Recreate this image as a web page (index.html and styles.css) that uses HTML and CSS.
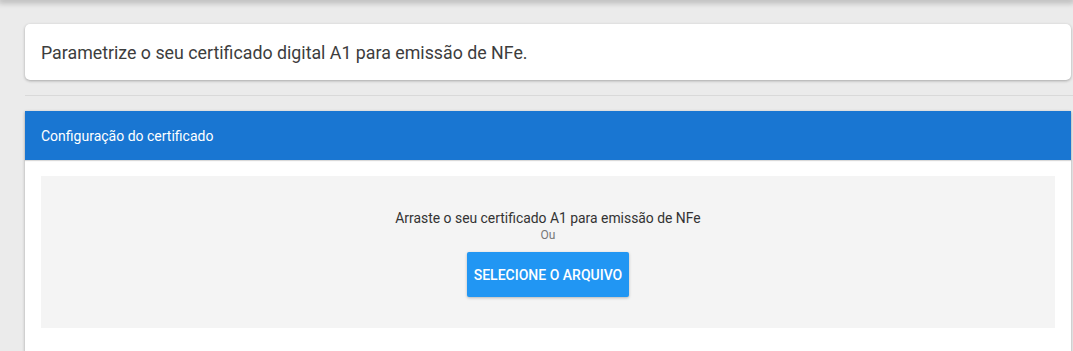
FILE: index.html
```html
<!DOCTYPE html>
<html lang="pt-BR">
<head>
    <meta charset="UTF-8">
    <meta name="viewport" content="width=device-width, initial-scale=1.0">
    <title>Certificado digital</title>
    <link rel="stylesheet" href="styles.css">
</head>
<body>
    <div class="top-shadow"></div>

    <div class="page">
        <div class="intro-card">
            Parametrize o seu certificado digital A1 para emissão de NFe.
        </div>

        <hr class="divider">

        <div class="panel">
            <div class="panel-header">Configuração do certificado</div>
            <div class="panel-body">
                <div class="dropzone">
                    <p class="drop-text">Arraste o seu certificado A1 para emissão de NFe</p>
                    <p class="drop-or">Ou</p>
                    <button class="btn-file">SELECIONE O ARQUIVO</button>
                </div>
            </div>
        </div>
    </div>
</body>
</html>
```

FILE: styles.css
```css
* {
    margin: 0;
    padding: 0;
    box-sizing: border-box;
}

body {
    font-family: Roboto, 'Liberation Sans', Arial, sans-serif;
    background: #ebebeb;
    height: 351px;
    overflow: hidden;
}

.top-shadow {
    height: 0;
    box-shadow: 0 0 6px 2px rgba(0, 0, 0, 0.35);
}

.page {
    padding: 24px 2px 0 25px;
}

.intro-card {
    background: white;
    height: 56px;
    padding: 0 16px;
    display: flex;
    align-items: center;
    border-radius: 5px;
    box-shadow: 0 1px 3px rgba(0, 0, 0, 0.3);
    font-size: 17.8px;
    color: #3d3d3d;
}

.divider {
    border: none;
    border-top: 1px solid #d9d9d9;
    margin: 15px -2px 15px 0;
}

.panel {
    background: white;
    box-shadow: 0 1px 3px rgba(0, 0, 0, 0.3);
}

.panel-header {
    background: #1976d2;
    height: 49px;
    padding: 0 16px;
    display: flex;
    align-items: center;
    color: white;
    font-size: 14px;
    box-shadow: 0 1px 1px rgba(0, 0, 0, 0.15);
}

.panel-body {
    padding: 16px 16px 40px;
}

.dropzone {
    background: #f4f4f4;
    padding: 33px 0 31px;
    display: flex;
    flex-direction: column;
    align-items: center;
    text-align: center;
}

.drop-text {
    font-size: 13.9px;
    line-height: 18px;
    color: #333;
}

.drop-or {
    font-size: 12px;
    line-height: 16px;
    color: #777;
}

.btn-file {
    margin-top: 9px;
    height: 45px;
    padding: 0 7px;
    border: none;
    border-radius: 2px;
    background: #2196f3;
    color: white;
    font-family: inherit;
    font-size: 14px;
    font-weight: 500;
    cursor: pointer;
    box-shadow: 0 1px 3px rgba(0, 0, 0, 0.25);
}
```
